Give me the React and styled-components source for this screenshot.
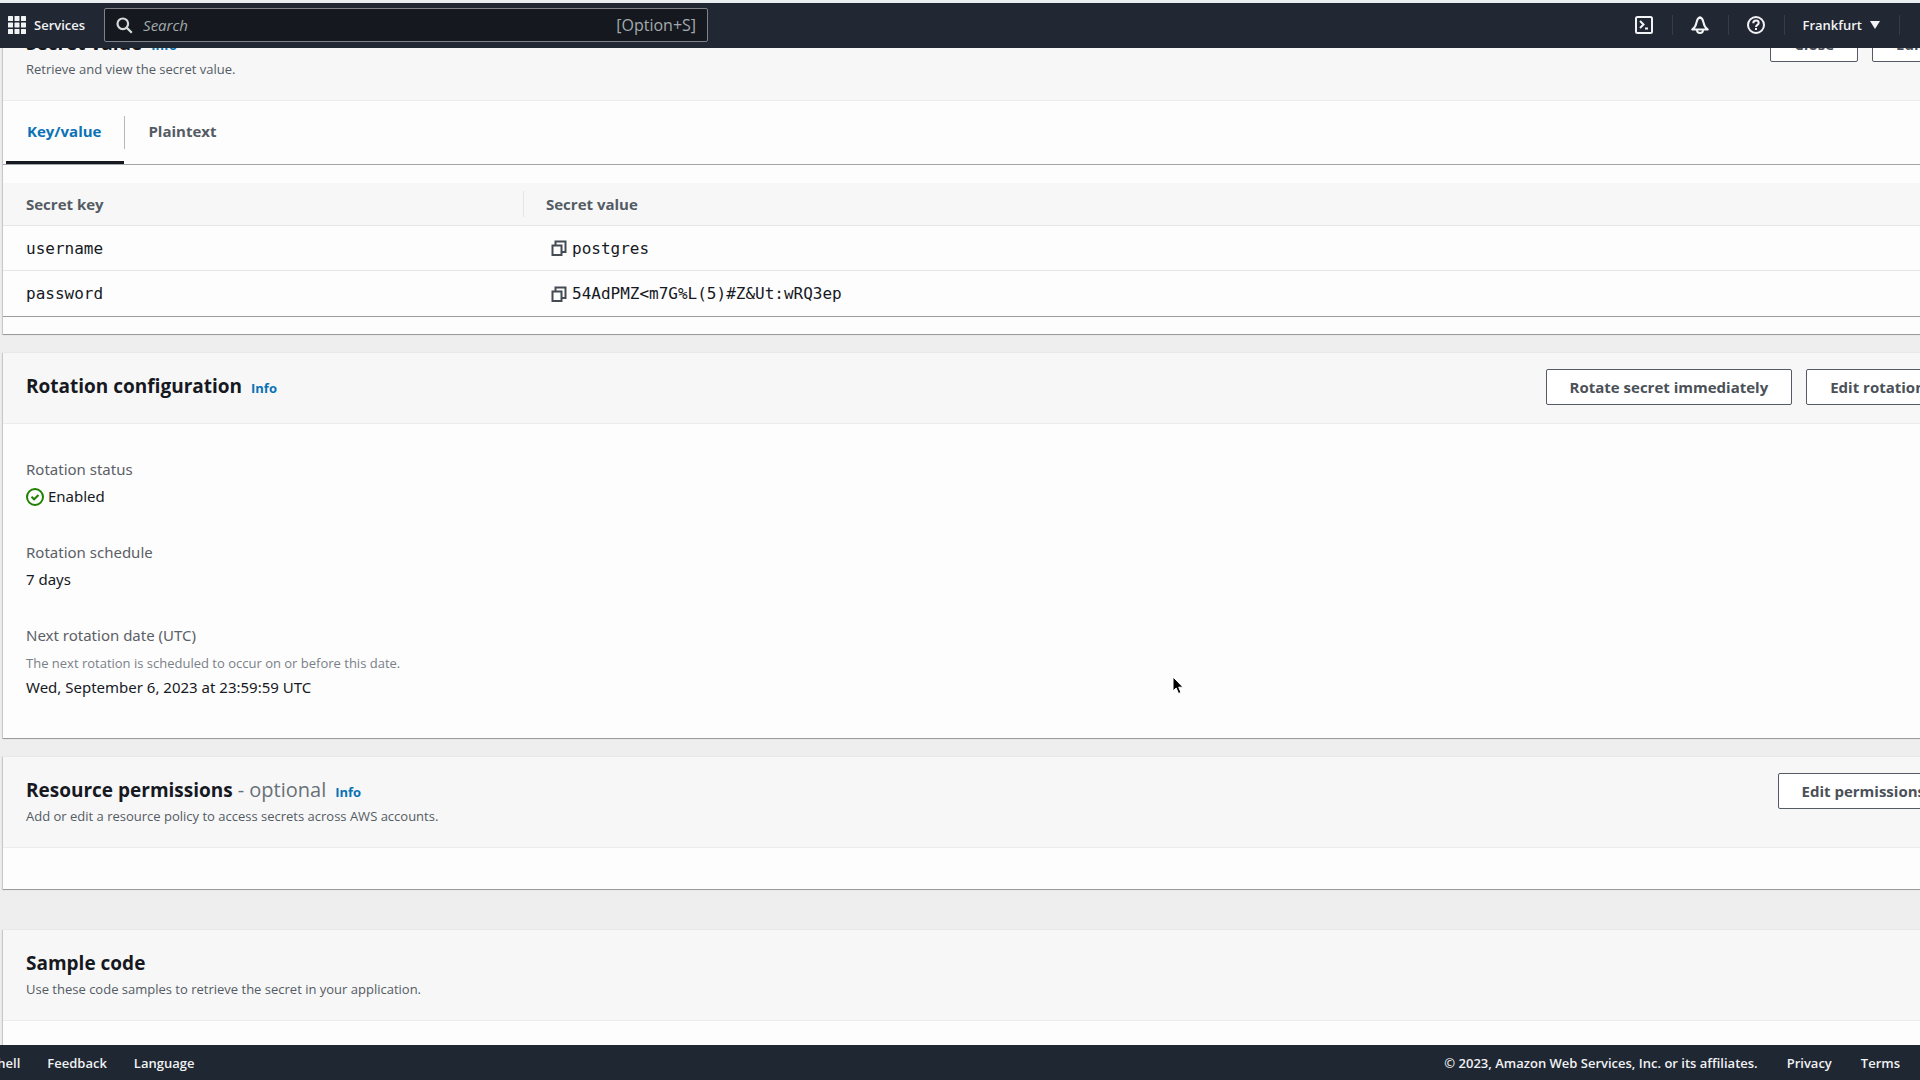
import React, { useState } from "react";
import styled, { createGlobalStyle, css } from "styled-components";

const GlobalStyle = createGlobalStyle`
  * {
    box-sizing: border-box;
  }

  body {
    margin: 0;
    overflow: hidden;
    background: #eeeeee;
    color: #16191f;
    font-family: "Open Sans", "Noto Sans", sans-serif;
    font-size: 16px;
  }

  button,
  input {
    font-family: inherit;
  }
`;

const Page = styled.div`
  display: flex;
  flex-direction: column;
  height: 100vh;
  overflow: hidden;
`;

const TopBar = styled.header`
  flex: none;
  display: flex;
  align-items: center;
  height: 48px;
  padding: 0 0 1px 8px;
  border-top: 3px solid #e9eef1;
  background: #212733;
  color: #ffffff;
`;

const NavButton = styled.button`
  display: flex;
  align-items: center;
  gap: 8px;
  padding: 0;
  border: 0;
  background: none;
  color: #f2f3f5;
  font-size: 13px;
  font-weight: 600;
`;

const SearchBox = styled.label`
  display: flex;
  align-items: center;
  gap: 10px;
  width: 604px;
  height: 34px;
  margin-left: 19px;
  padding: 0 11px;
  border: 1px solid #7d828c;
  border-radius: 2px;
  background: #15191f;
  color: #d5dbdb;
`;

const SearchInput = styled.input`
  flex: 1;
  min-width: 0;
  padding: 0;
  border: 0;
  outline: 0;
  background: none;
  color: #ffffff;
  font-size: 15px;

  &::placeholder {
    color: #a3a9ad;
    font-style: italic;
    opacity: 1;
  }
`;

const Shortcut = styled.span`
  color: #a3a9ad;
  font-size: 16px;
`;

const NavTools = styled.nav`
  display: flex;
  align-items: center;
  margin-left: auto;
`;

const NavItem = styled.div`
  display: flex;
  align-items: center;
  height: 20px;
  padding: 0 19px 0 18px;
  border-right: 1px solid #363d49;

  &:last-child {
    border-right: 0;
    padding: 0 0 0 20px;
  }
`;

const Main = styled.main`
  flex: 1;
  min-height: 0;
  overflow: hidden;
`;

/* Wider than the window and scrolled down to the secret value */
const Content = styled.div`
  margin: -38px -52px 0 3px;
`;

const Card = styled.section`
  margin-bottom: ${({ $gap }) => $gap || 18}px;
  border-bottom: 1px solid #9a9c9c;
  background: #fdfdfd;
  box-shadow: -1px 0 1px #c8c8c8;
`;

const CardHeader = styled.div`
  display: flex;
  align-items: flex-start;
  justify-content: space-between;
  padding: 16px 23px 18px;
  border-bottom: 1px solid #ececec;
  background: #f7f7f7;
`;

const Title = styled.h2`
  margin: 0;
  font-size: 19px;
  font-weight: 700;
  line-height: 34px;
`;

const Optional = styled.span`
  color: #687078;
  font-size: 20px;
  font-weight: 400;
  line-height: 20px;
`;

const Info = styled.a`
  margin-left: 4px;
  color: #0a72b5;
  font-size: 13px;
  font-weight: 700;
  line-height: 20px;
  text-decoration: none;
`;

const Description = styled.p`
  margin: 0 0 4px;
  color: #545b64;
  font-size: 13px;
  line-height: 18px;
`;

const Actions = styled.div`
  display: flex;
  gap: 14px;
`;

const Button = styled.button`
  height: 36px;
  padding: 0 23px;
  border: 1px solid #545b64;
  border-radius: 2px;
  background: #ffffff;
  color: #4b5158;
  font-size: 15px;
  font-weight: 700;
  white-space: nowrap;
`;

const Tabs = styled.div`
  display: flex;
  align-items: stretch;
  height: 64px;
  padding-left: 3px;
  border-bottom: 1px solid #a3a6a6;
`;

const Tab = styled.button`
  position: relative;
  padding: 0 23px 3px 21px;
  border: 0;
  background: none;
  color: #545b64;
  font-size: 15px;
  font-weight: 700;

  &:not(:first-child) {
    padding-left: 24px;
  }

  &:not(:first-child)::before {
    content: "";
    position: absolute;
    top: 15px;
    left: 0;
    height: 33px;
    border-left: 1px solid #b5b9bb;
  }

  ${({ $active }) =>
    $active &&
    css`
      padding-bottom: 0;
      border-bottom: 3px solid #16191f;
      color: #0a72b5;
    `}
`;

const Table = styled.table`
  width: 100%;
  margin-top: 18px;
  border-spacing: 0;
  table-layout: fixed;
`;

const HeadCell = styled.th`
  width: ${({ $width }) => $width || "auto"};
  height: 43px;
  padding: 0;
  border-bottom: 1px solid #e6e6e6;
  background: #f7f7f7;
  color: #545b64;
  font-size: 15px;
  font-weight: 700;
  text-align: left;
`;

const HeadLabel = styled.div`
  padding: 3px 23px;
  line-height: 20px;

  ${HeadCell}:not(:first-child) > & {
    padding-left: 22px;
    border-left: 1px solid #e3e5e5;
  }
`;

const Cell = styled.td`
  height: 45px;
  padding: 0 23px;
  border-bottom: 1px solid #e6e6e6;
  font-family: "DejaVu Sans Mono", "Liberation Mono", monospace;
  font-size: 16px;

  tr:last-child > & {
    height: 46px;
    border-bottom-color: #9a9c9c;
  }
`;

const CopyValue = styled.div`
  display: flex;
  align-items: center;
  gap: 5px;
  padding-left: 5px;
`;

const CopyButton = styled.button`
  display: flex;
  padding: 0;
  border: 0;
  background: none;
  color: #454b52;
`;

const TableFooter = styled.div`
  height: 17px;
`;

const Details = styled.dl`
  display: flex;
  flex-direction: column;
  gap: 29px;
  margin: 0;
  padding: 32px 23px 37px;
  font-family: "Noto Sans", "Open Sans", sans-serif;
  font-size: 15px;
  line-height: 27px;
`;

const Term = styled.dt`
  color: #5b6066;
`;

const Value = styled.dd`
  display: flex;
  align-items: center;
  gap: 4px;
  margin: 0;
`;

const Constraint = styled.p`
  margin: 3px 0 0;
  color: #7a8087;
  font-family: "Open Sans", "Noto Sans", sans-serif;
  font-size: 13px;
  line-height: 22px;
`;

const EmptyBody = styled.div`
  height: 41px;
`;

const Footer = styled.footer`
  flex: none;
  display: flex;
  align-items: center;
  height: 35px;
  background: #1f2733;
  color: #f0f1f2;
  font-size: 13px;
  font-weight: 600;
`;

const FooterGroup = styled.div`
  display: flex;
  gap: ${({ $right }) => ($right ? 29 : 27)}px;
  margin: ${({ $right }) => ($right ? "0 20px 0 auto" : "0 0 0 -46px")};
`;

const FooterLink = styled.a`
  color: inherit;
  text-decoration: none;
`;

const Pointer = styled.svg`
  position: fixed;
  top: 676px;
  left: 1172px;
  pointer-events: none;
`;

const GridIcon = () => (
  <svg width="18" height="18" viewBox="0 0 18 18" fill="currentColor">
    {[0, 6.5, 13].map((y) =>
      [0, 6.5, 13].map((x) => (
        <rect key={`${x}-${y}`} x={x} y={y} width="5" height="5" rx="0.5" />
      ))
    )}
  </svg>
);

const SearchIcon = () => (
  <svg width="17" height="17" viewBox="0 0 17 17" fill="none" stroke="currentColor" strokeWidth="2.2">
    <circle cx="6.8" cy="6.8" r="5.3" />
    <path d="M10.6 10.6l5.2 5.2" />
  </svg>
);

const ShellIcon = () => (
  <svg width="18" height="18" viewBox="0 0 18 18" fill="none" stroke="currentColor" strokeWidth="2">
    <rect x="1" y="1" width="16" height="16" rx="1.5" />
    <path d="M5 5l3.500 3.500L5 12M10 12.500h3" />
  </svg>
);

const BellIcon = () => (
  <svg width="18" height="18" viewBox="0 0 18 18" fill="none" stroke="currentColor" strokeWidth="2" strokeLinejoin="round">
    <path d="M9 1.300C7 2 6 3.800 5.500 6.500 5 9.800 4 11.500 1.200 13.500h15.600C14 11.500 13 9.800 12.500 6.500 12 3.800 11 2 9 1.300z" />
    <path d="M6 13.500v.5a3 3 0 0 0 6 0v-.5" />
  </svg>
);

const HelpIcon = () => (
  <svg width="18" height="18" viewBox="0 0 18 18" fill="none" stroke="currentColor" strokeWidth="2">
    <circle cx="9" cy="9" r="8" />
    <path d="M6.300 7.200c0-1.700 1.200-2.700 2.700-2.700s2.700 1 2.700 2.400c0 1.900-2.700 2-2.700 4M9 12v2" />
  </svg>
);

const CaretIcon = () => (
  <svg width="10" height="8" viewBox="0 0 10 8" fill="currentColor">
    <path d="M0 0h10L5 8z" />
  </svg>
);

const CopyIcon = () => (
  <svg width="16" height="16" viewBox="0 0 16 16" fill="none" stroke="currentColor" strokeWidth="2">
    <path d="M1.500 5.500h9V15h-9zM4.500 5.500V1.500h10V12H10.500" />
  </svg>
);

const CheckIcon = () => (
  <svg width="18" height="18" viewBox="0 0 18 18" fill="none" stroke="#1d8102" strokeWidth="2">
    <circle cx="9" cy="9" r="8" />
    <path d="M5.500 8.800l2.600 2.500 4.400-4.300" />
  </svg>
);

const secrets = [
  { key: "username", value: "postgres" },
  { key: "password", value: "54AdPMZ<m7G%L(5)#Z&Ut:wRQ3ep" },
];

export default function App() {
  const [tab, setTab] = useState("Key/value");

  return (
    <Page>
      <GlobalStyle />

      <TopBar>
        <NavButton>
          <GridIcon />
          Services
        </NavButton>
        <SearchBox>
          <SearchIcon />
          <SearchInput type="text" placeholder="Search" aria-label="Search" />
          <Shortcut>[Option+S]</Shortcut>
        </SearchBox>
        <NavTools>
          <NavItem>
            <NavButton aria-label="CloudShell">
              <ShellIcon />
            </NavButton>
          </NavItem>
          <NavItem>
            <NavButton aria-label="Notifications">
              <BellIcon />
            </NavButton>
          </NavItem>
          <NavItem>
            <NavButton aria-label="Help">
              <HelpIcon />
            </NavButton>
          </NavItem>
          <NavItem>
            <NavButton>
              Frankfurt
              <CaretIcon />
            </NavButton>
          </NavItem>
          <NavItem />
        </NavTools>
      </TopBar>

      <Main>
        <Content>
          <Card>
            <CardHeader>
              <div>
                <Title>
                  Secret value <Info href="#">Info</Info>
                </Title>
                <Description>Retrieve and view the secret value.</Description>
              </div>
              <Actions>
                <Button>Close</Button>
                <Button>Edit</Button>
              </Actions>
            </CardHeader>
            <Tabs role="tablist">
              {["Key/value", "Plaintext"].map((name) => (
                <Tab
                  key={name}
                  role="tab"
                  aria-selected={tab === name}
                  $active={tab === name}
                  onClick={() => setTab(name)}
                >
                  {name}
                </Tab>
              ))}
            </Tabs>
            <Table>
              <thead>
                <tr>
                  <HeadCell $width="520px">
                    <HeadLabel>Secret key</HeadLabel>
                  </HeadCell>
                  <HeadCell>
                    <HeadLabel>Secret value</HeadLabel>
                  </HeadCell>
                </tr>
              </thead>
              <tbody>
                {secrets.map(({ key, value }) => (
                  <tr key={key}>
                    <Cell>{key}</Cell>
                    <Cell>
                      <CopyValue>
                        <CopyButton aria-label={`Copy ${key}`}>
                          <CopyIcon />
                        </CopyButton>
                        {value}
                      </CopyValue>
                    </Cell>
                  </tr>
                ))}
              </tbody>
            </Table>
            <TableFooter />
          </Card>

          <Card>
            <CardHeader>
              <Title>
                Rotation configuration <Info href="#">Info</Info>
              </Title>
              <Actions>
                <Button>Rotate secret immediately</Button>
                <Button>Edit rotation</Button>
              </Actions>
            </CardHeader>
            <Details>
              <div>
                <Term>Rotation status</Term>
                <Value>
                  <CheckIcon />
                  Enabled
                </Value>
              </div>
              <div>
                <Term>Rotation schedule</Term>
                <Value>7 days</Value>
              </div>
              <div>
                <Term>
                  Next rotation date (UTC)
                  <Constraint>
                    The next rotation is scheduled to occur on or before this date.
                  </Constraint>
                </Term>
                <Value>Wed, September 6, 2023 at 23:59:59 UTC</Value>
              </div>
            </Details>
          </Card>

          <Card $gap={40}>
            <CardHeader>
              <div>
                <Title>
                  Resource permissions <Optional>- optional</Optional>{" "}
                  <Info href="#">Info</Info>
                </Title>
                <Description>
                  Add or edit a resource policy to access secrets across AWS accounts.
                </Description>
              </div>
              <Actions>
                <Button>Edit permissions</Button>
              </Actions>
            </CardHeader>
            <EmptyBody />
          </Card>

          <Card>
            <CardHeader>
              <div>
                <Title>Sample code</Title>
                <Description>
                  Use these code samples to retrieve the secret in your application.
                </Description>
              </div>
            </CardHeader>
            <EmptyBody />
          </Card>
        </Content>
      </Main>

      <Footer>
        <FooterGroup>
          <FooterLink href="#">CloudShell</FooterLink>
          <FooterLink href="#">Feedback</FooterLink>
          <FooterLink href="#">Language</FooterLink>
        </FooterGroup>
        <FooterGroup $right>
          <span>© 2023, Amazon Web Services, Inc. or its affiliates.</span>
          <FooterLink href="#">Privacy</FooterLink>
          <FooterLink href="#">Terms</FooterLink>
        </FooterGroup>
      </Footer>

      <Pointer width="12" height="19" viewBox="0 0 12 19">
        <path d="M1 1v14l3.200-3 2.300 5.500 2.500-1-2.300-5.300h4.300z" fill="#000000" stroke="#ffffff" />
      </Pointer>
    </Page>
  );
}
